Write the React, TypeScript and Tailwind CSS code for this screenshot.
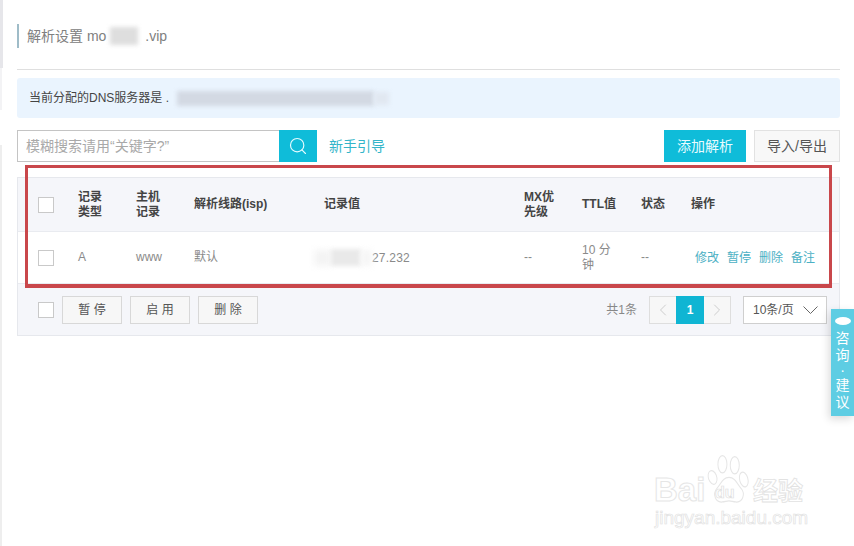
import React from "react";
import { Search, ChevronLeft, ChevronRight } from "lucide-react";

const FONT = "[font-family:'Liberation_Sans','Noto_Sans_CJK_SC',sans-serif]";

function Check() {
  return <span className="block w-4 h-4 bg-white border border-[#c9c9c9]" />;
}

function Head({ children }: { children: React.ReactNode }) {
  return <div className="text-[12px] leading-[15px] font-bold text-[#444]">{children}</div>;
}

function Cell({ children }: { children: React.ReactNode }) {
  return <div className="text-[12px] leading-[15px] text-[#8a8a8a]">{children}</div>;
}

function FootBtn({ children }: { children: React.ReactNode }) {
  return (
    <button className="w-[60px] h-[28px] bg-[#f7f7f7] border border-[#d8d8d8] text-[12px] text-[#555] whitespace-pre">
      {children}
    </button>
  );
}

const cols = "grid grid-cols-[60px_58px_58px_130px_200px_58px_59px_50px_1fr] items-center";

export default function App() {
  return (
    <div className={`relative w-[854px] h-[546px] overflow-hidden bg-white ${FONT}`}>
      <div className="pl-[17px] pr-[14px] pt-[24px]">
        <div className="h-[24px] border-l-2 border-[#9fbcc8] pl-2 flex items-center text-[14px] text-[#808080]">
          <span>解析设置 mo</span>
          <span className="ml-[4px] w-[28px] h-[18px] bg-[#dedede] blur-[2px]" />
          <span className="ml-[7px]">.vip</span>
        </div>
        <div className="mt-[21px] h-px bg-[#dfdfdf]" />
        <div className="mt-[8px] h-[40px] rounded-[3px] bg-[#eaf4fe] pl-3 flex items-center text-[12px] text-[#444]">
          <span>当前分配的DNS服务器是 .</span>
          <span className="ml-[8px] w-[197px] h-[15px] bg-[#d3d9e3] blur-[2px]" />
          <span className="w-[15px] h-[13px] bg-[#e1e8f1] blur-[2px]" />
        </div>

        <div className="mt-[12px] flex items-center h-[32px]">
          <div className="w-[262px] h-[32px] border border-[#c4c4c4] border-r-0 px-2 flex items-center text-[14px] text-[#a9a9a9]">
            模糊搜索请用“关键字?”
          </div>
          <button className="w-[38px] h-[32px] bg-[#0fbcd9] flex items-center justify-center text-[#e6fbff]">
            <Search size={20} strokeWidth={1.4} />
          </button>
          <span className="ml-3 text-[14px] text-[#33b5c9]">新手引导</span>
          <button className="ml-auto w-[82px] h-[32px] bg-[#0fbcd9] text-[14px] text-[#e8fbff]">添加解析</button>
          <button className="ml-2 w-[86px] h-[32px] bg-[#f8f8f8] border border-[#e2e2e2] text-[14px] text-[#555]">导入/导出</button>
        </div>

        <div className="mt-[15px] bg-[#f5f6fa] border border-[#e6e8ed]">
          <div className={`${cols} h-[53px]`}>
            <div className="pl-[20px]"><Check /></div>
            <Head>记录<br />类型</Head>
            <Head>主机<br />记录</Head>
            <Head>解析线路(isp)</Head>
            <Head>记录值</Head>
            <Head>MX优<br />先级</Head>
            <Head>TTL值</Head>
            <Head>状态</Head>
            <Head>操作</Head>
          </div>
          <div className={`${cols} h-[52px] bg-white border-t border-[#e9ebf0]`}>
            <div className="pl-[20px]"><Check /></div>
            <Cell>A</Cell>
            <Cell>www</Cell>
            <Cell>默认</Cell>
            <div className="flex items-center text-[12px] text-[#8a8a8a]">
              <span className="-ml-[10px] w-[17px] h-[16px] bg-[#f4f4f4] blur-[3px]" />
              <span className="w-[30px] h-[17px] bg-[#e9e9e9] blur-[2px]" />
              <span className="w-[11px] h-[16px] bg-[#f6f6f6] blur-[3px]" />
              <span className="tracking-[0.2px]">27.232</span>
            </div>
            <Cell>--</Cell>
            <Cell>10 分<br />钟</Cell>
            <Cell>--</Cell>
            <div className="pl-1 flex gap-2 text-[12px] text-[#4bb0c4]">
              <span>修改</span><span>暂停</span><span>删除</span><span>备注</span>
            </div>
          </div>
          <div className="h-[52px] border-t border-[#e9ebf0] pl-[20px] pr-[12px] flex items-center">
            <Check />
            <div className="ml-2 flex gap-2">
              <FootBtn>暂 停</FootBtn>
              <FootBtn>启 用</FootBtn>
              <FootBtn>删 除</FootBtn>
            </div>
            <span className="ml-auto text-[12px] text-[#888]">共1条</span>
            <div className="ml-3 w-[82px] h-[28px] flex border border-[#dedede] bg-[#f7f7f7] text-[#c4c4c4]">
              <span className="w-[26px] flex items-center justify-center"><ChevronLeft size={20} strokeWidth={1} /></span>
              <span className="w-[28px] -my-px bg-[#0fb5d3] text-white text-[12px] font-bold flex items-center justify-center">1</span>
              <span className="flex-1 flex items-center justify-center"><ChevronRight size={20} strokeWidth={1} /></span>
            </div>
            <div className="ml-3 w-[84px] h-[28px] bg-white border border-[#cfcfcf] pl-[9px] pr-[8px] flex items-center justify-between text-[12px] text-[#555]">
              <span>10条/页</span>
              <svg width="15" height="8" viewBox="0 0 15 8" fill="none" stroke="#666" strokeWidth="1">
                <path d="M0.5 0.5 L7.5 7.5 L14.5 0.5" />
              </svg>
            </div>
          </div>
        </div>
      </div>

      {/* annotation rectangle */}
      <div className="absolute left-[25px] top-[165px] w-[807px] h-[123px] border-[3px] border-b-[4px] border-[#c9474b] pointer-events-none" />

      {/* left edge strips */}
      <div className="absolute left-0 top-0 w-[3px] h-[68px] bg-[#e6e6ea]" />
      <div className="absolute left-0 top-[68px] w-[2px] h-[42px] bg-[#f3f3f5]" />
      <div className="absolute left-0 top-[145px] w-[2px] h-[401px] bg-[#eeeeee]" />

      {/* floating consult tab */}
      <div className="absolute left-[831px] top-[309px] w-[23px] h-[107px] bg-[#5ecde3] shadow-[-2px_3px_8px_rgba(0,0,0,0.15)] flex flex-col items-center text-white text-[14px] leading-[17px] pt-[8px]">
        <span className="block w-[16px] h-[8px] mb-[5px] rounded-[50%] bg-white" />
        <span>咨</span>
        <span>询</span>
        <span className="leading-[13px]">·</span>
        <span>建</span>
        <span>议</span>
      </div>

      {/* watermark */}
      <div className="absolute left-[654px] top-[454px] w-[170px] h-[75px] pointer-events-none">
        <span className="absolute left-0 top-[18px] text-[33px] leading-[36px] font-bold text-white [-webkit-text-stroke:1px_#e6e6e6]">Bai</span>
        <svg className="absolute left-[52px] top-0" width="46" height="51" viewBox="0 0 56 50" preserveAspectRatio="none" fill="white" stroke="#e6e6e6" strokeWidth="1.2">
          <ellipse cx="8" cy="23" rx="5" ry="7" transform="rotate(-25 8 23)" />
          <ellipse cx="20" cy="10" rx="5.5" ry="8.5" />
          <ellipse cx="35" cy="11" rx="5.5" ry="8.5" />
          <ellipse cx="46" cy="25" rx="5" ry="7.5" transform="rotate(-20 46 25)" />
          <path d="M28 23c8 0 10 7 15 11 5 5 2 14-7 13-3 0-5-1-8-1s-5 1-8 1c-9 1-12-8-7-13 5-4 7-11 15-11z" />
        </svg>
        <span className="absolute left-[61px] top-[31px] text-[16px] leading-[16px] font-bold text-white [-webkit-text-stroke:0.7px_#dedede]">du</span>
        <span className="absolute left-[99px] top-[22px] text-[25px] leading-[30px] font-bold text-white [-webkit-text-stroke:0.8px_#e2e2e2]">经验</span>
        <span className="absolute left-[1px] top-[54px] text-[19px] leading-[20px] text-white [-webkit-text-stroke:0.7px_#e2e2e2]">jingyan.baidu.com</span>
      </div>
    </div>
  );
}
